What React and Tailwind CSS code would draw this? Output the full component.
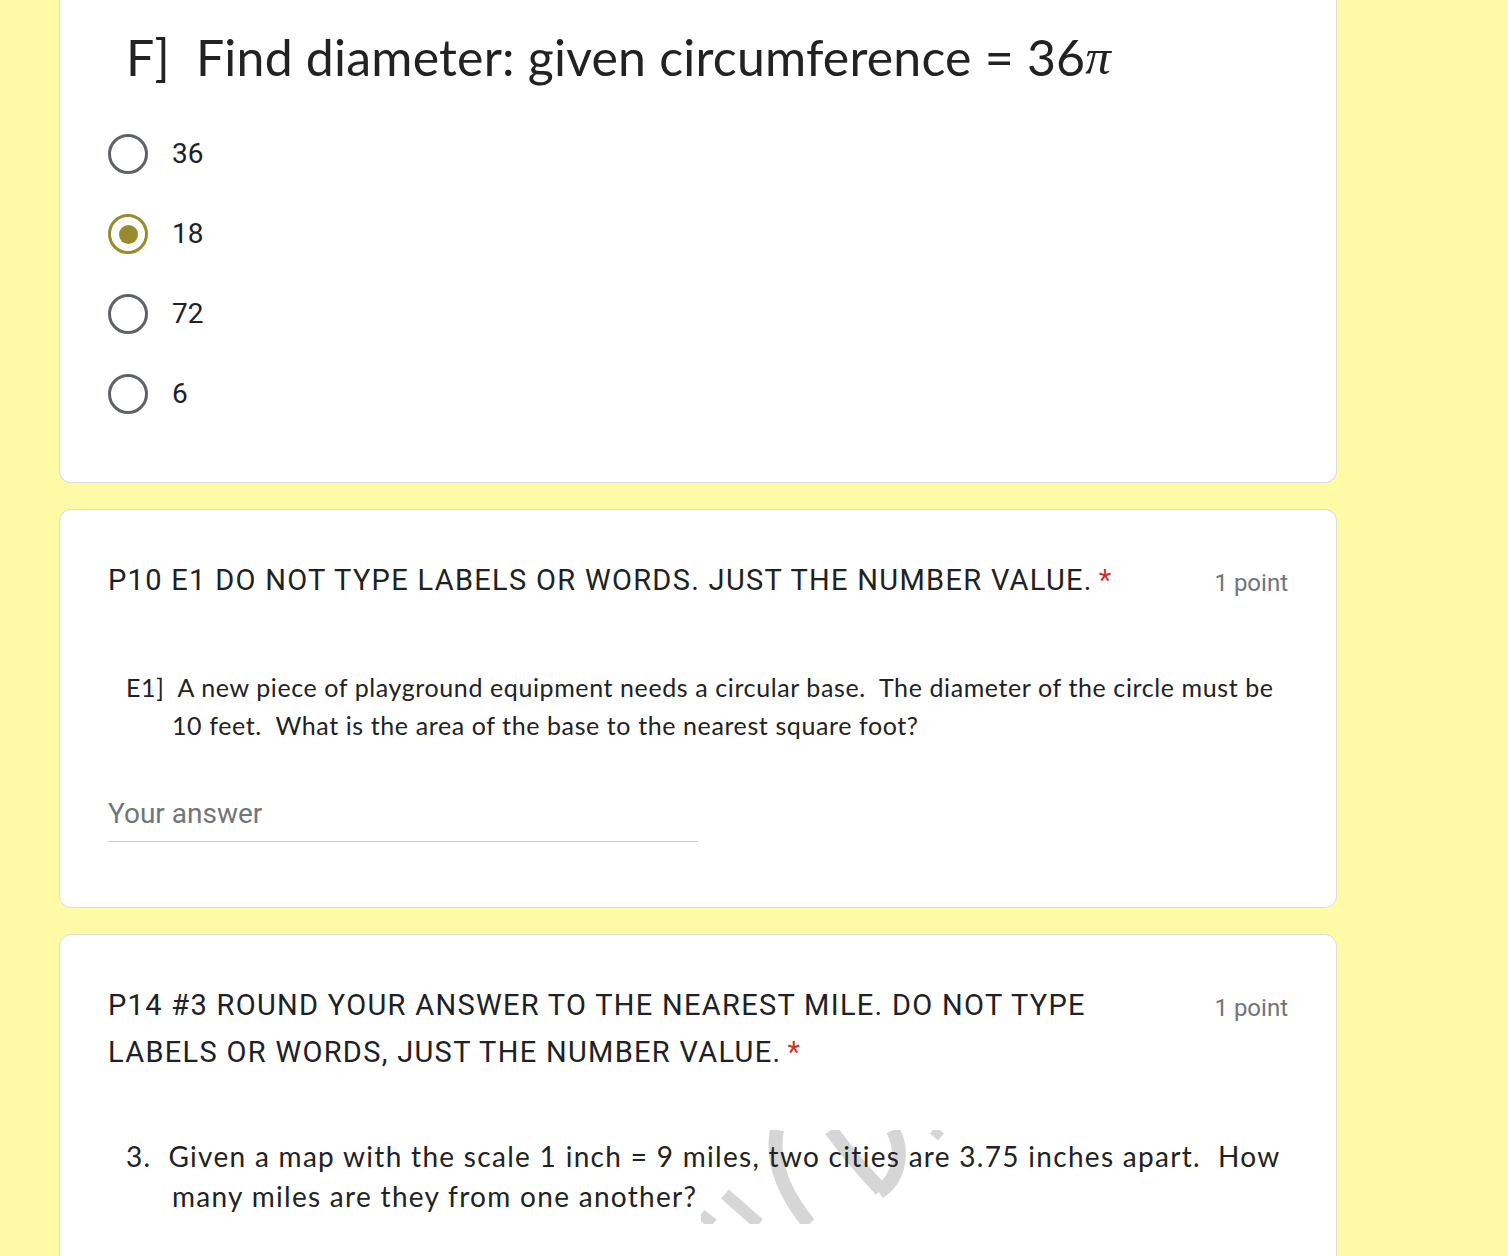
import React from "react";

const imgFont = { fontFamily: "Lato, 'Open Sans', sans-serif" };

function Radio({ label, checked }) {
  return (
    <div className="h-[80px] flex items-center">
      {checked ? (
        <div className="w-[40px] h-[40px] rounded-full border-[3.5px] border-[#978b2d] flex items-center justify-center">
          <div className="w-[19px] h-[19px] rounded-full bg-[#978b2d]" />
        </div>
      ) : (
        <div className="w-[40px] h-[40px] rounded-full border-[3.5px] border-[#5f6368]" />
      )}
      <span className="ml-[24px] text-[28px] text-[#202124] font-['Roboto',sans-serif]">{label}</span>
    </div>
  );
}

function Watermark() {
  return (
    <svg
      className="absolute left-[641px] top-[195px] pointer-events-none"
      width="260"
      height="94"
      viewBox="0 0 260 94"
    >
      <g stroke="#d6d6d6" strokeWidth="14" fill="none" strokeLinecap="butt">
        <path d="M76 0 C 70 30, 82 62, 108 94" />
        <path d="M130 0 C 148 25, 166 45, 180 60" />
        <path d="M178 62 C 200 48, 202 20, 192 0" />
        <path d="M24 64 L 58 94" strokeWidth="12" />
        <path d="M0 84 L 12 94" strokeWidth="11" />
        <path d="M232 0 L 240 7" strokeWidth="9" />
      </g>
    </svg>
  );
}

const titleCls =
  "text-[29px] leading-[47px] tracking-[1.3px] text-[#202124] font-['Roboto',sans-serif]";

export default function App() {
  return (
    <div className="w-[1508px] h-[1256px] overflow-hidden bg-[#fffaa6] pl-[59px]">
      <div className="w-[1278px] flex flex-col gap-[26px]">
        {/* Card 1 */}
        <div className="bg-white border border-t-0 border-[#dadce0] rounded-b-[12px] px-[48px] pt-[26px] pb-[48px]">
          <div
            className="ml-[18px] h-[62px] flex items-center text-[50px] tracking-[0.2px] text-[#222] whitespace-pre"
            style={imgFont}
          >
            {"F]  Find diameter: given circumference = 36"}
            <span className="italic font-['Liberation_Serif',serif] text-[51px]">π</span>
          </div>
          <div className="mt-[26px] flex flex-col">
            <Radio label="36" />
            <Radio label="18" checked />
            <Radio label="72" />
            <Radio label="6" />
          </div>
        </div>

        {/* Card 2 */}
        <div className="bg-white border border-[#dadce0] rounded-[12px] px-[48px] pt-[47px] pb-[65px]">
          <div className="flex items-start justify-between">
            <div className={titleCls}>
              P10 E1 DO NOT TYPE LABELS OR WORDS. JUST THE NUMBER VALUE.
              <span className="text-[#d93025] ml-[6px]">*</span>
            </div>
            <div className="text-[24px] leading-[47px] text-[#70757a] font-['Roboto',sans-serif] pt-[3px]">1 point</div>
          </div>
          <p
            className="mt-[61px] ml-[18px] pl-[46px] -indent-[46px] text-[25px] tracking-[0.6px] leading-[38px] text-[#222] whitespace-pre"
            style={imgFont}
          >
            {"E1]  A new piece of playground equipment needs a circular base.  The diameter of the circle must be"}
            <br />
            {"10 feet.  What is the area of the base to the nearest square foot?"}
          </p>
          <div className="mt-[51px] w-[590px] border-b border-[#c8c8c8] pb-[8px]">
            <div className="text-[28px] leading-[38px] text-[#70757a] font-['Roboto',sans-serif]">Your answer</div>
          </div>
        </div>

        {/* Card 3 */}
        <div className="relative bg-white border border-[#dadce0] rounded-[12px] px-[48px] pt-[47px] pb-[60px] h-[400px]">
          <Watermark />
          <div className="relative flex items-start justify-between">
            <div className={titleCls}>
              P14 #3 ROUND YOUR ANSWER TO THE NEAREST MILE. DO NOT TYPE
              <br />
              LABELS OR WORDS, JUST THE NUMBER VALUE.
              <span className="text-[#d93025] ml-[6px]">*</span>
            </div>
            <div className="text-[24px] leading-[47px] text-[#70757a] font-['Roboto',sans-serif] pt-[3px]">1 point</div>
          </div>
          <p
            className="relative mt-[60px] ml-[18px] pl-[46px] -indent-[46px] text-[28px] tracking-[1.3px] leading-[40px] text-[#222] whitespace-pre"
            style={imgFont}
          >
            {"3.  Given a map with the scale 1 inch = 9 miles, two cities are 3.75 inches apart.  How"}
            <br />
            {"many miles are they from one another?"}
          </p>
        </div>
      </div>
    </div>
  );
}
